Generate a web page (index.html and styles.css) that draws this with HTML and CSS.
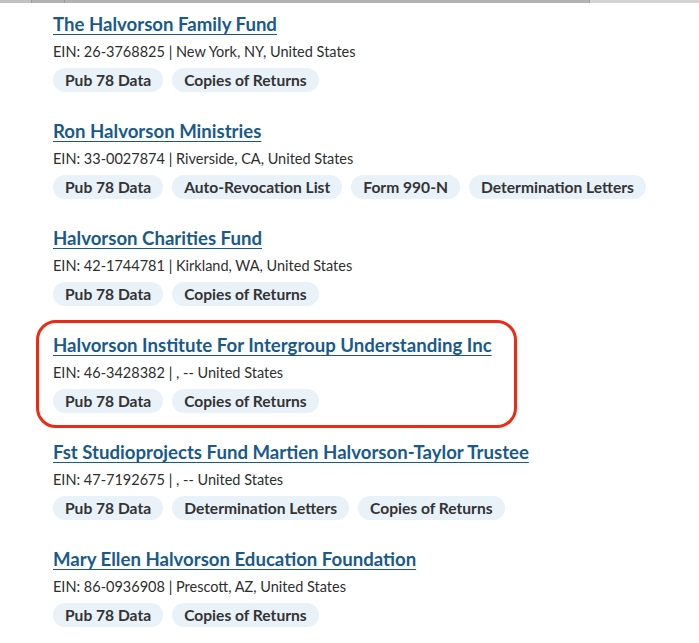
FILE: index.html
```html
<!DOCTYPE html>
<html lang="en">
<head>
<meta charset="UTF-8">
<meta name="viewport" content="width=device-width, initial-scale=1.0">
<title>Search Results - Halvorson</title>
<link rel="stylesheet" href="styles.css">
</head>
<body>
<div class="topbar">
  <span class="seg seg-a"></span>
  <span class="seg seg-b"></span>
  <span class="seg seg-c"></span>
  <span class="seg seg-d"></span>
</div>
<div class="results">
  <div class="result">
    <a class="name" href="#">The Halvorson Family Fund</a>
    <p class="meta">EIN: 26-3768825 <span class="sep">|</span> New York, NY, United States</p>
    <div class="tags">
      <span class="tag">Pub 78 Data</span>
      <span class="tag">Copies of Returns</span>
    </div>
  </div>
  <div class="result">
    <a class="name" href="#">Ron Halvorson Ministries</a>
    <p class="meta">EIN: 33-0027874 <span class="sep">|</span> Riverside, CA, United States</p>
    <div class="tags">
      <span class="tag">Pub 78 Data</span>
      <span class="tag">Auto-Revocation List</span>
      <span class="tag">Form 990-N</span>
      <span class="tag">Determination Letters</span>
    </div>
  </div>
  <div class="result">
    <a class="name" href="#">Halvorson Charities Fund</a>
    <p class="meta">EIN: 42-1744781 <span class="sep">|</span> Kirkland, WA, United States</p>
    <div class="tags">
      <span class="tag">Pub 78 Data</span>
      <span class="tag">Copies of Returns</span>
    </div>
  </div>
  <div class="result highlight">
    <a class="name" href="#">Halvorson Institute For Intergroup Understanding Inc</a>
    <p class="meta">EIN: 46-3428382 <span class="sep">|</span> , -- United States</p>
    <div class="tags">
      <span class="tag">Pub 78 Data</span>
      <span class="tag">Copies of Returns</span>
    </div>
  </div>
  <div class="result">
    <a class="name" href="#">Fst Studioprojects Fund Martien Halvorson-Taylor Trustee</a>
    <p class="meta">EIN: 47-7192675 <span class="sep">|</span> , -- United States</p>
    <div class="tags">
      <span class="tag">Pub 78 Data</span>
      <span class="tag">Determination Letters</span>
      <span class="tag">Copies of Returns</span>
    </div>
  </div>
  <div class="result">
    <a class="name" href="#">Mary Ellen Halvorson Education Foundation</a>
    <p class="meta">EIN: 86-0936908 <span class="sep">|</span> Prescott, AZ, United States</p>
    <div class="tags">
      <span class="tag">Pub 78 Data</span>
      <span class="tag">Copies of Returns</span>
    </div>
  </div>
</div>
</body>
</html>
```

FILE: styles.css
```css
body {
  margin: 0;
  padding: 0;
  background: #fff;
  font-family: Lato, "Liberation Sans", sans-serif;
  color: #333;
}
.topbar {
  display: flex;
  height: 3px;
  background: #b3b3b3;
}
.seg {
  height: 3px;
}
.seg-a {
  width: 31px;
  background: #c2c2c2;
  border-right: 1px solid #9a9a9a;
}
.seg-b {
  width: 32px;
  border-right: 1px solid #9a9a9a;
}
.seg-c {
  flex: 1;
}
.seg-d {
  width: 109px;
  background: #d4d4d4;
  border-left: 1px solid #a0a0a0;
}
.results {
  padding: 9px 0 0 53px;
}
.result {
  position: relative;
  height: 107px;
}
.name {
  display: inline-block;
  font-size: 18.6px;
  line-height: 24px;
  font-weight: 700;
  color: #195a8c;
  text-decoration: underline;
  text-decoration-thickness: 1px;
  text-underline-offset: 3px;
}
.meta {
  margin: 6px 0 0;
  font-size: 14.5px;
  line-height: 20px;
  color: #2e2e2e;
}
.sep {
  color: #222;
}
.tags {
  display: flex;
  gap: 9px;
  margin-top: 6px;
}
.tag {
  height: 24px;
  line-height: 24px;
  padding: 0 12px;
  border-radius: 12px;
  background: #e9f1f9;
  font-size: 15.6px;
  font-weight: 700;
  color: #333;
}
.highlight::before {
  content: "";
  position: absolute;
  left: -17px;
  top: -13px;
  width: 475px;
  height: 102px;
  border: 3px solid #ee2a12;
  border-radius: 20px;
}
```
